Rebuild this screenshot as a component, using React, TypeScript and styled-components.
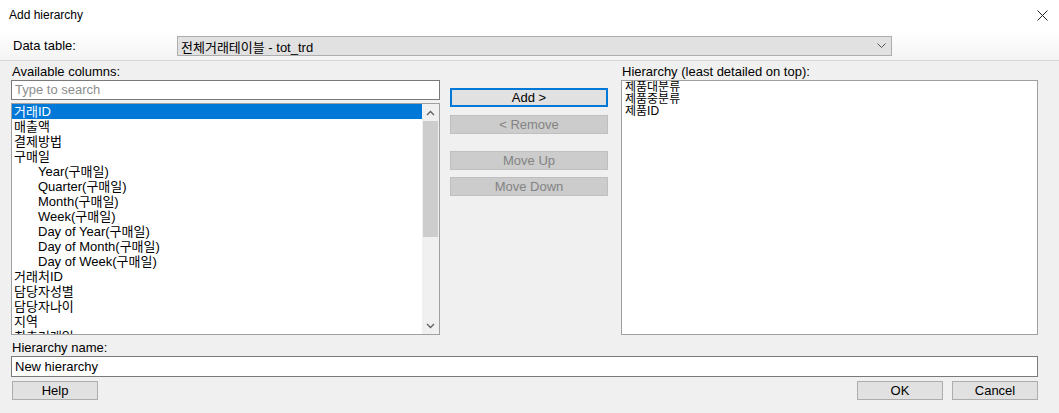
import styled, { createGlobalStyle } from "styled-components";

const GlobalStyle = createGlobalStyle`
  html, body {
    margin: 0;
    padding: 0;
    background: #f0f0f0;
  }
  body {
    font-family: "Liberation Sans", "Noto Sans CJK KR", sans-serif;
    font-size: 13px;
    color: #000;
  }
`;

const Dialog = styled.div`
  width: 1059px;
  height: 413px;
  background: #f0f0f0;
  display: flex;
  flex-direction: column;
  overflow: hidden;
`;
const TitleBar = styled.div`
  height: 30px;
  background: #ffffff;
  display: flex;
  align-items: center;
  justify-content: space-between;
  padding: 0 10px 0 9px;
  font-size: 12px;
`;
const CloseIcon = styled.svg`
  width: 11px;
  height: 11px;
  margin-right: 1px;
`;
const HeaderBand = styled.div`
  height: 30px;
  background: linear-gradient(#ffffff, #f4f4f4);
  border-bottom: 1px solid #d7d7d7;
  display: flex;
  align-items: center;
  padding: 0 0 0 13px;
`;
const HeaderLabel = styled.span`
  width: 164px;
`;
const Combo = styled.div`
  width: 715px;
  height: 20px;
  box-sizing: border-box;
  background: #e1e1e1;
  border: 1px solid #adadad;
  display: flex;
  align-items: center;
  justify-content: space-between;
  padding: 0 5px 0 3px;
  margin-top: 2px;
`;
const Chevron = styled.svg`
  width: 9px;
  height: 6px;
`;
const Main = styled.div`
  display: grid;
  grid-template-columns: 429px 158px 1fr;
  column-gap: 10px;
  padding: 2px 21px 0 11px;
`;
const Column = styled.div<{ $offset?: number }>`
  display: flex;
  flex-direction: column;
  padding-left: ${(p) => p.$offset ?? 0}px;
`;
const Label = styled.div`
  height: 17px;
  line-height: 17px;
  padding-left: 1px;
  white-space: nowrap;
`;
const SearchBox = styled.div`
  height: 18px;
  background: #fff;
  border: 1px solid #7a7a7a;
  color: #8d8d8d;
  line-height: 18px;
  padding-left: 3px;
`;
const ListBox = styled.div<{ $height: number }>`
  height: ${(p) => p.$height}px;
  margin-top: ${(p) => (p.$height < 250 ? 3 : 0)}px;
  background: #fff;
  border: 1px solid #a0a0a0;
  display: flex;
  box-sizing: border-box;
  overflow: hidden;
`;
const Rows = styled.div`
  flex: 1;
  overflow: hidden;
`;
const Row = styled.div<{ $selected?: boolean; $indent?: boolean }>`
  height: 15px;
  line-height: 15px;
  white-space: nowrap;
  padding-left: ${(p) => (p.$indent ? 26 : 2)}px;
  background: ${(p) => (p.$selected ? "#0078d7" : "transparent")};
  color: ${(p) => (p.$selected ? "#fff" : "#000")};
`;
const ScrollBar = styled.div`
  width: 17px;
  background: #f0f0f0;
  display: flex;
  flex-direction: column;
`;
const ScrollArrow = styled.div`
  height: 17px;
  display: flex;
  align-items: center;
  justify-content: center;
`;
const Track = styled.div`
  flex: 1;
  padding: 0 1px;
`;
const Thumb = styled.div`
  height: 116px;
  background: #cdcdcd;
`;
const ButtonStack = styled.div`
  display: flex;
  flex-direction: column;
  padding-top: 25px;
`;
const Button = styled.div<{ $disabled?: boolean; $focused?: boolean; $gap?: number }>`
  height: 19px;
  box-sizing: border-box;
  margin-top: ${(p) => p.$gap ?? 0}px;
  background: ${(p) => (p.$disabled ? "#cccccc" : "#e1e1e1")};
  border: ${(p) =>
    p.$focused ? "2px solid #0078d7" : p.$disabled ? "1px solid #bfbfbf" : "1px solid #adadad"};
  color: ${(p) => (p.$disabled ? "#838383" : "#000")};
  display: flex;
  align-items: center;
  justify-content: center;
`;
const HierarchyRow = styled.div`
  height: 12px;
  line-height: 12px;
  font-size: 12px;
  padding-left: 3px;
  white-space: nowrap;
`;
const Bottom = styled.div`
  display: flex;
  flex-direction: column;
  padding: 4px 21px 0 11px;
`;
const NameInput = styled.div`
  height: 19px;
  background: #fff;
  border: 1px solid #7a7a7a;
  line-height: 19px;
  padding-left: 3px;
`;
const Footer = styled.div`
  display: flex;
  align-items: center;
  margin-top: 4px;
  padding-left: 1px;
  gap: 9px;
`;
const FooterButton = styled(Button)`
  width: 86px;
`;
const Spacer = styled.div`
  flex: 1;
`;

const columns: { name: string; indent?: boolean }[] = [
  { name: "거래ID" },
  { name: "매출액" },
  { name: "결제방법" },
  { name: "구매일" },
  { name: "Year(구매일)", indent: true },
  { name: "Quarter(구매일)", indent: true },
  { name: "Month(구매일)", indent: true },
  { name: "Week(구매일)", indent: true },
  { name: "Day of Year(구매일)", indent: true },
  { name: "Day of Month(구매일)", indent: true },
  { name: "Day of Week(구매일)", indent: true },
  { name: "거래처ID" },
  { name: "담당자성별" },
  { name: "담당자나이" },
  { name: "지역" },
  { name: "최초거래일" },
  { name: "제품ID" },
];

const hierarchy = ["제품대분류", "제품중분류", "제품ID"];

function Arrow({ up }: { up?: boolean }) {
  return (
    <svg width="9" height="6" viewBox="0 0 9 6">
      <path
        d={up ? "M1 5 L4.5 1.5 L8 5" : "M1 1 L4.5 4.5 L8 1"}
        fill="none"
        stroke="#606060"
        strokeWidth="1.3"
      />
    </svg>
  );
}

export default function App() {
  return (
    <Dialog>
      <GlobalStyle />
      <TitleBar>
        <span>Add hierarchy</span>
        <CloseIcon viewBox="0 0 11 11">
          <path d="M0.5 0.5 L10.5 10.5 M10.5 0.5 L0.5 10.5" stroke="#222" strokeWidth="1" />
        </CloseIcon>
      </TitleBar>
      <HeaderBand>
        <HeaderLabel>Data table:</HeaderLabel>
        <Combo>
          <span>전체거래테이블 - tot_trd</span>
          <Chevron viewBox="0 0 9 6">
            <path d="M0.5 0.5 L4.5 4.5 L8.5 0.5" fill="none" stroke="#555" strokeWidth="1" />
          </Chevron>
        </Combo>
      </HeaderBand>
      <Main>
        <Column>
          <Label>Available columns:</Label>
          <SearchBox>Type to search</SearchBox>
          <ListBox $height={232}>
            <Rows>
              {columns.map((c, i) => (
                <Row key={c.name} $selected={i === 0} $indent={c.indent}>
                  {c.name}
                </Row>
              ))}
            </Rows>
            <ScrollBar>
              <ScrollArrow>
                <Arrow up />
              </ScrollArrow>
              <Track>
                <Thumb />
              </Track>
              <ScrollArrow>
                <Arrow />
              </ScrollArrow>
            </ScrollBar>
          </ListBox>
        </Column>
        <ButtonStack>
          <Button $focused>Add &gt;</Button>
          <Button $disabled $gap={8}>
            &lt; Remove
          </Button>
          <Button $disabled $gap={17}>
            Move Up
          </Button>
          <Button $disabled $gap={7}>
            Move Down
          </Button>
        </ButtonStack>
        <Column $offset={3}>
          <Label>Hierarchy (least detailed on top):</Label>
          <ListBox $height={255}>
            <Rows>
              {hierarchy.map((h) => (
                <HierarchyRow key={h}>{h}</HierarchyRow>
              ))}
            </Rows>
          </ListBox>
        </Column>
      </Main>
      <Bottom>
        <Label>Hierarchy name:</Label>
        <NameInput>New hierarchy</NameInput>
        <Footer>
          <FooterButton>Help</FooterButton>
          <Spacer />
          <FooterButton>OK</FooterButton>
          <FooterButton>Cancel</FooterButton>
        </Footer>
      </Bottom>
    </Dialog>
  );
}
